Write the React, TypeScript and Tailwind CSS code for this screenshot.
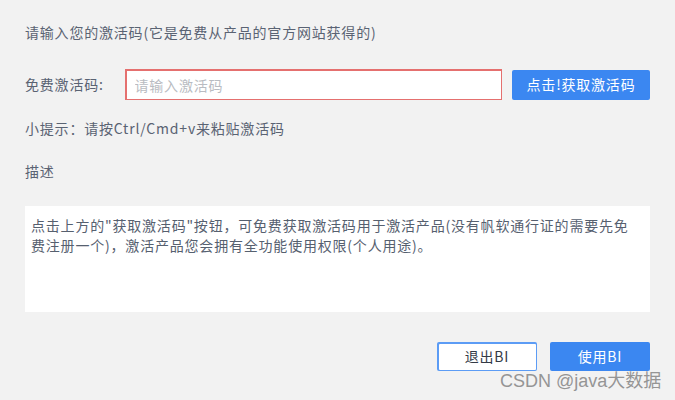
export default function App() {
  return (
    <div
      className="relative w-[675px] h-[400px] overflow-hidden bg-[#f2f2f2] text-[#5a6373] text-[14px] tracking-[0.8px]"
      style={{ fontFamily: '"Noto Sans CJK SC", "Noto Sans", sans-serif' }}
    >
      <div className="flex flex-col px-[25px]">
        <div className="h-[20px] leading-[20px] mt-[22px]">请输入您的激活码(它是免费从产品的官方网站获得的)</div>

        <div className="flex items-center mt-[27px] h-[31px]">
          <span className="w-[100px] shrink-0">免费激活码:</span>
          <div className="w-[377px] h-[31px] bg-[#e5706f] p-[1.5px] flex">
            <input
              className="w-full h-full bg-white px-[8px] outline-none text-[14px] placeholder:text-[#b9bcc2]"
              placeholder="请输入激活码"
            />
          </div>
          <button className="ml-[10px] w-[138px] h-[30px] rounded-[2px] bg-[#3b87f1] text-white text-[14px]">
            点击!获取激活码
          </button>
        </div>

        <div className="h-[20px] leading-[20px] mt-[18px]">小提示：请按Ctrl/Cmd+v来粘贴激活码</div>

        <div className="h-[20px] leading-[20px] mt-[23px]">描述</div>

        <div className="mt-[25px] w-[625px] h-[106px] bg-white pl-[6px] pr-[18px] pt-[9px] leading-[20px] text-[#56606f]">
          点击上方的"获取激活码"按钮，可免费获取激活码用于激活产品(没有帆软通行证的需要先免费注册一个)，激活产品您会拥有全功能使用权限(个人用途)。
        </div>

        <div className="flex justify-end gap-[13px] mt-[30px]">
          <div className="w-[100px] h-[29px] rounded-[2px] bg-[#5c9cf5] p-[1.5px] flex">
            <button className="w-full h-full rounded-[1px] bg-white text-[#333a46] text-[14px]">退出BI</button>
          </div>
          <button className="w-[100px] h-[29px] rounded-[2px] bg-[#3b87f1] text-white text-[14px]">
            使用BI
          </button>
        </div>
      </div>

      <div
        className="absolute left-[500px] top-[368px] text-[18px] tracking-normal text-[#959595]"
        style={{ fontFamily: '"Liberation Sans", "Noto Sans CJK SC", sans-serif' }}
      >
        CSDN @java大数据
      </div>
    </div>
  );
}
